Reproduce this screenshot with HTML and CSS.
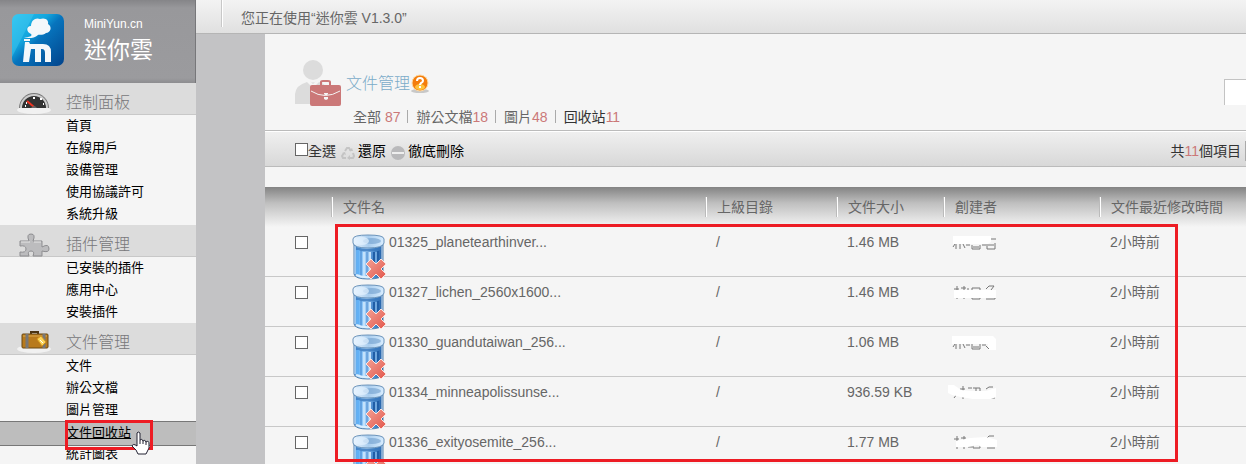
FILE: index.html
```html
<!DOCTYPE html>
<html lang="zh-Hant">
<head>
    <meta charset="UTF-8">
    <title>迷你雲 - 文件管理</title>
    <link rel="stylesheet" href="styles.css">
</head>
<body>
    <svg class="defs" aria-hidden="true">
        <defs>
            <linearGradient id="binBody">
                <stop offset="0" stop-color="#4a8fd6"/>
                <stop offset=".15" stop-color="#7cc0fa"/>
                <stop offset=".45" stop-color="#a5d0f8"/>
                <stop offset=".7" stop-color="#4a8dd0"/>
                <stop offset="1" stop-color="#1d5aa0"/>
            </linearGradient>
            <linearGradient id="binTop">
                <stop offset="0" stop-color="#eef7ff"/>
                <stop offset=".5" stop-color="#a9cdee"/>
                <stop offset="1" stop-color="#d9edff"/>
            </linearGradient>
            <linearGradient id="binCross" x2="1" y2="1">
                <stop offset="0" stop-color="#f3a196"/>
                <stop offset="1" stop-color="#e2564a"/>
            </linearGradient>
        </defs>
        <symbol id="bin" viewBox="0 0 34 46">
            <path d="M2 9 V40 Q3 45 16 45 Q30 45 31 40 V9Z" fill="url(#binBody)" stroke="#5580ab"/>
            <path d="M3 12 V40 M30 12 V28" stroke="#dcedfc"/>
            <path d="M4 13 Q16 17 29 13 V16 Q16 19 4 16Z" fill="#3a78bd" opacity=".8"/>
            <path d="M6 16 V40" stroke="#61b0f5" stroke-width="3"/>
            <path d="M9 17 V42 M15 18 V42 M20 18 V36" stroke="#3c7fc8" stroke-width="1"/>
            <path d="M12 18 V42 M18 18 V42" stroke="#c4e1fb" stroke-width="2"/>
            <path d="M22 18 V32 M26 17 V30" stroke="#1f5da6" stroke-width="2"/>
            <path d="M24 18 V30" stroke="#9ccbf5" stroke-width="1"/>
            <path d="M4 41 Q10 44 20 43" fill="none" stroke="#dbeefd" stroke-width="2"/>
            <path d="M1 5 Q1 1 16 1 Q32 1 32 5 V9 Q31 14 16 14 Q2 14 1 9Z" fill="url(#binTop)" stroke="#6b93ba"/>
            <ellipse cx="20" cy="7" rx="9" ry="3" fill="#6f9fcd" opacity=".6"/>
            <ellipse cx="10" cy="7" rx="7" ry="4" fill="#e4f2ff" opacity=".7"/>
            <path d="M19 25 L24 30 L29 25 L34 30 L29 35 L34 40 L29 45 L24 40 L19 45 L14 40 L19 35 L14 30Z" fill="url(#binCross)" stroke="#fbe3df" stroke-width="1" stroke-linejoin="round"/>
        </symbol>
    </svg>

    <aside class="sidebar">
        <div class="brand">
            <svg class="brand-logo" viewBox="0 0 52 52" aria-hidden="true">
                <defs>
                    <linearGradient id="logoBg" x2="1" y2="1">
                        <stop offset="0" stop-color="#28c3ee"/>
                        <stop offset=".35" stop-color="#13a6de"/>
                        <stop offset=".5" stop-color="#0774bd"/>
                        <stop offset="1" stop-color="#02438b"/>
                    </linearGradient>
                </defs>
                <rect width="52" height="52" rx="7" fill="url(#logoBg)"/>
                <path d="M0 43 L22 0 H7 Q0 0 0 7Z" fill="#4ed0f5" opacity=".4"/>
                <path d="M19 20 C14 18 14 12 19 12 C19 6 24 3 28 5 C34 3 37 7 36 10 C41 13 38 19 34 19 C30 22 27 20 26 21 C22 25 17 24 12 24 C17 23 21 22 19 20Z" fill="#f4f8fb"/>
                <path d="M12 25 H18 V27 H12Z" fill="#f4f8fb"/>
                <path d="M11 48 L13 28 H17 L18 30 H31 Q39 30 39 38 V48 H33 V39 Q33 35 30 35 H29 V48 H23 V35 H19 L17 48Z" fill="#f4f8fb"/>
            </svg>
            <div class="brand-text">
                <span class="brand-url">MiniYun.cn</span>
                <span class="brand-name">迷你雲</span>
            </div>
        </div>

        <nav>
            <h2 class="menu-title">
                <svg class="menu-icon" viewBox="0 0 34 24" aria-hidden="true">
                    <ellipse cx="17" cy="19" rx="17" ry="4" fill="#f6f6f6" opacity=".8"/>
                    <path d="M2 17 A15 15 0 0 1 32 17Z" fill="#777"/>
                    <path d="M3 17 A14 14 0 0 1 31 17Z" fill="#ccc"/>
                    <path d="M5 17 A12 12 0 0 1 29 17Z" fill="#333"/>
                    <path d="M9 12h1 M16 7h2 M23 8h2 M26 13h1 M8 15h1" stroke="#fff" stroke-width="2"/>
                    <path d="M10 10 L17 16" stroke="#e32" stroke-width="2"/>
                    <path d="M14 17 q3 -4 6 0" fill="#666"/>
                </svg>
                控制面板
            </h2>
            <ul class="menu">
                <li><a href="#">首頁</a></li>
                <li><a href="#">在線用戶</a></li>
                <li><a href="#">設備管理</a></li>
                <li><a href="#">使用協議許可</a></li>
                <li><a href="#">系統升級</a></li>
            </ul>

            <h2 class="menu-title">
                <svg class="menu-icon" viewBox="0 0 34 24" aria-hidden="true">
                    <path d="M3 8 H12 Q9 1 14 1 Q19 1 16 8 H25 V14 Q32 10 32 16 Q32 20 25 18 V23 H16 Q18 18 14 18 Q10 18 12 23 H3 V19 Q9 20 9 16 Q9 12 3 13Z" fill="#bcbcbe" stroke="#8d8d90"/>
                    <path d="M4 9 H13 M17 9 H24" stroke="#e5e5e5"/>
                </svg>
                插件管理
            </h2>
            <ul class="menu">
                <li><a href="#">已安裝的插件</a></li>
                <li><a href="#">應用中心</a></li>
                <li><a href="#">安裝插件</a></li>
            </ul>

            <h2 class="menu-title">
                <svg class="menu-icon" viewBox="0 0 34 24" aria-hidden="true">
                    <ellipse cx="17" cy="18" rx="17" ry="4" fill="#f6f6f6" opacity=".8"/>
                    <path d="M14 3 V1 H21 V3" fill="none" stroke="#4b3412" stroke-width="2"/>
                    <rect x="5" y="3" width="26" height="14" rx="1" fill="#b87a1c" stroke="#6b4813"/>
                    <path d="M6 5 H30" stroke="#dda94b"/>
                    <path d="M10 3 V17 M27 3 V17" stroke="#777" stroke-width="3"/>
                    <path d="M20 8 L24 5 L29 11 L25 15Z" fill="#fbd55c" stroke="#d4961c"/>
                    <path d="M23 9 L26 12" stroke="#fff"/>
                </svg>
                文件管理
            </h2>
            <ul class="menu">
                <li><a href="#">文件</a></li>
                <li><a href="#">辦公文檔</a></li>
                <li><a href="#">圖片管理</a></li>
                <li class="active">
                    <a href="#">文件回收站</a>
                    <span class="mark-menu"></span>
                    <svg class="cursor" viewBox="0 0 20 26" aria-hidden="true">
                        <path d="M6 15 V3 Q7 1 9 3 V10 Q11 8 12 11 Q14 9 15 12 Q18 10 18 14 V18 L15 24 H7 L5 20 L1 16 Q2 13 6 16Z" fill="#fff" stroke="#223"/>
                        <path d="M9 10 V14 M12 11 V14 M15 12 V15" stroke="#223"/>
                    </svg>
                </li>
                <li><a href="#">統計圖表</a></li>
            </ul>
        </nav>
    </aside>

    <div class="main">
        <header class="topbar">
            <span class="topbar-text">您正在使用“迷你雲 V1.3.0”</span>
        </header>

        <div class="content">
            <div class="page-head">
                <svg class="page-icon" viewBox="0 0 46 48" aria-hidden="true">
                    <circle cx="18" cy="11" r="10" fill="#dcdcdc"/>
                    <path d="M0 45 V35 Q1 26 12 23 L18 29 L24 23 Q32 25 34 34 V45Z" fill="#dcdcdc"/>
                    <path d="M15 22 Q18 25 21 22 L18 25Z" fill="#dcdcdc"/>
                    <path d="M26 26 V23 Q26 22 28 22 H33 Q35 22 35 23 V26" fill="none" stroke="#cb7878" stroke-width="2"/>
                    <rect x="15" y="26" width="31" height="21" rx="2" fill="#cb7878"/>
                    <path d="M16 32 Q30 41 45 32" fill="none" stroke="#f5f5f5"/>
                    <path d="M29 34 h4 v1 l-1 1 h-2 l-1 -1Z M29 38 h4 v2 l-2 1 l-2 -1Z" fill="#f5f5f5"/>
                </svg>
                <div class="page-info">
                    <h1 class="page-title">
                        文件管理
                        <svg class="help" viewBox="0 0 20 20" aria-label="說明">
                            <ellipse cx="10" cy="17" rx="9" ry="2" fill="#aaa" opacity=".6"/>
                            <circle cx="10" cy="9" r="8" fill="#f47d0c" stroke="#fbd9a5"/>
                            <ellipse cx="10" cy="13" rx="5" ry="3" fill="#ffc23c"/>
                            <path d="M7 7 Q7 4 10 4 Q13 4 13 7 Q13 8 11 9 Q10 10 10 11 M10 12 V14" fill="none" stroke="#fff" stroke-width="2"/>
                        </svg>
                    </h1>
                    <div class="tabs">
                        <a href="#">全部 <b>87</b></a>
                        <a href="#">辦公文檔<b>18</b></a>
                        <a href="#">圖片<b>48</b></a>
                        <a href="#" class="current">回收站<b>11</b></a>
                    </div>
                </div>
                <input class="search" type="text" aria-label="搜索">
            </div>

            <div class="toolbar">
                <input type="checkbox" id="all">
                <label for="all">全選</label>
                <button type="button">
                    <svg class="tool-icon" viewBox="0 0 14 14" aria-hidden="true">
                        <path d="M4 5 L6 2 H8 L10 5 M12 7 L13 10 L12 12 H8 M5 12 H2 L1 10 L3 7" fill="none" stroke="#c4c4c4" stroke-width="2"/>
                        <path d="M8 5 H12 L11 2Z M9 9 V14 L6 12Z M1 7 L4 6 L5 9Z" fill="#c4c4c4"/>
                    </svg>
                    還原
                </button>
                <button type="button">
                    <svg class="tool-icon" viewBox="0 0 14 14" aria-hidden="true">
                        <circle cx="7" cy="7" r="7" fill="#b9b9bb"/>
                        <rect x="1" y="6" width="12" height="2" fill="#eee"/>
                    </svg>
                    徹底刪除
                </button>
                <span class="total">共<b>11</b>個項目</span>
            </div>

            <div class="list">
                <table class="files">
                    <colgroup>
                        <col class="col-check">
                        <col>
                        <col class="col-dir">
                        <col class="col-size">
                        <col class="col-creator">
                        <col class="col-time">
                    </colgroup>
                    <thead>
                        <tr>
                            <th></th>
                            <th><span>文件名</span></th>
                            <th><span>上級目錄</span></th>
                            <th><span>文件大小</span></th>
                            <th><span>創建者</span></th>
                            <th><span>文件最近修改時間</span></th>
                        </tr>
                    </thead>
                    <tbody>
                        <tr>
                            <td><input type="checkbox" aria-label="選擇 01325"></td>
                            <td><div class="file"><svg class="bin"><use href="#bin"/></svg>01325_planetearthinver...</div></td>
                            <td>/</td>
                            <td>1.46 MB</td>
                            <td>
                                <svg class="hidden-name" viewBox="0 0 50 16" aria-hidden="true">
                                    <path d="M8 9 V14 M5 12 L7 9 M12 9 V14 M15 9 L17 13 M18 10 H22 M24 10 V14 H32 V10 M25 12 H31 M34 10 H38 M39 9 V14 H47 V8 M40 10 H46 M43 4 H48" fill="none" stroke="#777"/>
                                    <path d="M5 1 H43 V7 L40 9 H5Z" fill="#fff"/>
                                </svg>
                            </td>
                            <td>2小時前</td>
                        </tr>
                        <tr>
                            <td><input type="checkbox" aria-label="選擇 01327"></td>
                            <td><div class="file"><svg class="bin"><use href="#bin"/></svg>01327_lichen_2560x1600...</div></td>
                            <td>/</td>
                            <td>1.46 MB</td>
                            <td>
                                <svg class="hidden-name" viewBox="0 0 50 16" aria-hidden="true">
                                    <path d="M6 4 H11 M9 1 V14 M13 3 H18 M16 1 V14 M20 3 V6 M24 3 H32 V14 H24Z M38 4 L41 1 H46 L43 5 M38 14 H47 V10" fill="none" stroke="#777"/>
                                    <path d="M6 5 H48 V13 H6Z" fill="#fff"/>
                                </svg>
                            </td>
                            <td>2小時前</td>
                        </tr>
                        <tr>
                            <td><input type="checkbox" aria-label="選擇 01330"></td>
                            <td><div class="file"><svg class="bin"><use href="#bin"/></svg>01330_guandutaiwan_256...</div></td>
                            <td>/</td>
                            <td>1.06 MB</td>
                            <td>
                                <svg class="hidden-name" viewBox="0 0 50 16" aria-hidden="true">
                                    <path d="M4 1 H45 L48 4 V15 H40 V9 H4Z" fill="#fff"/>
                                    <path d="M8 9 V14 M5 12 L7 9 M12 9 V14 M15 9 L17 13 M18 10 H22 M24 9 V14 H32 V9 M25 12 H31 M34 10 H38 M38 11 L41 14" fill="none" stroke="#777"/>
                                </svg>
                            </td>
                            <td>2小時前</td>
                        </tr>
                        <tr>
                            <td><input type="checkbox" aria-label="選擇 01334"></td>
                            <td><div class="file"><svg class="bin"><use href="#bin"/></svg>01334_minneapolissunse...</div></td>
                            <td>/</td>
                            <td>936.59 KB</td>
                            <td>
                                <svg class="hidden-name" viewBox="0 0 50 16" aria-hidden="true">
                                    <path d="M6 13 L9 9 M12 4 H17 M15 1 V14 M20 3 H24 M25 3 H32 V8 M28 3 V8 M38 4 L41 2 H45 M43 13 H47" fill="none" stroke="#777"/>
                                    <path d="M0 0 H6 L13 5 L24 6 H38 L48 3 V12 L43 14 H25 L13 12 L4 10 L0 8Z" fill="#fff"/>
                                </svg>
                            </td>
                            <td>2小時前</td>
                        </tr>
                        <tr>
                            <td><input type="checkbox" aria-label="選擇 01336"></td>
                            <td><div class="file"><svg class="bin"><use href="#bin"/></svg>01336_exityosemite_256...</div></td>
                            <td>/</td>
                            <td>1.77 MB</td>
                            <td>
                                <svg class="hidden-name" viewBox="0 0 50 16" aria-hidden="true">
                                    <path d="M6 4 H11 M9 1 V14 M13 3 H18 M16 1 V14 M20 12 H24 M25 9 V13 H32 V9 M38 4 L41 1 H46 M39 13 H47" fill="none" stroke="#777"/>
                                    <path d="M8 6 L22 3 L38 2 L49 5 V12 H33 L30 10 L20 12 H8Z" fill="#fff"/>
                                </svg>
                            </td>
                            <td>2小時前</td>
                        </tr>
                    </tbody>
                </table>
                <div class="mark-list"></div>
            </div>
        </div>
    </div>
</body>
</html>
```
FILE: styles.css
```css
* {
    box-sizing: border-box;
}

body {
    margin: 0;
    display: flex;
    height: 100vh;
    overflow: hidden;
    background: #c3c3c5;
    color: #666;
    font-family: "Liberation Sans", "Noto Sans CJK TC", sans-serif;
    font-size: 14px;
    line-height: 20px;
}

a {
    color: inherit;
    text-decoration: none;
}

b {
    color: #cb7878;
    font-weight: normal;
}

h1,
h2,
ul {
    margin: 0;
    padding: 0;
}

h1,
h2 {
    font-weight: 300;
}

input[type="checkbox"] {
    appearance: none;
    width: 13px;
    height: 13px;
    margin: 0;
    border: 1px solid #666;
    background: #fff;
}

.defs {
    position: absolute;
    width: 0;
    height: 0;
}

/* sidebar */
.sidebar {
    flex: 0 0 196px;
    background: #f5f5f5;
}

.brand {
    display: flex;
    gap: 20px;
    height: 83px;
    padding: 14px 12px;
    background: linear-gradient(#858588, #98989b 8px, #9b9b9e 78px, #8d8d90);
    border-right: 1px solid #77777a;
    color: #fff;
}

.brand-logo {
    width: 52px;
    height: 52px;
}

.brand-text {
    display: flex;
    flex-direction: column;
}

.brand-url {
    font-size: 12px;
}

.brand-name {
    font-size: 23px;
    line-height: 32px;
}

.menu-title {
    display: flex;
    align-items: center;
    gap: 15px;
    height: 32px;
    padding: 8px 0 0 17px;
    background: #dcdcdc;
    border-bottom: 1px solid #c8c8c8;
    color: #77777a;
    font-size: 16px;
}

.menu-icon {
    width: 34px;
    height: 24px;
}

.menu {
    list-style: none;
    color: #000;
    font-size: 13px;
    line-height: 22px;
}

.menu li {
    height: 22px;
    padding-left: 66px;
}

.menu .active {
    position: relative;
    height: 25px;
    margin-bottom: -3px;
    background: #bdbdbd;
    border-top: 1px solid #777;
    border-bottom: 1px solid #777;
}

.active a {
    text-decoration: underline;
}

.mark-menu {
    position: absolute;
    top: -2px;
    left: 65px;
    width: 88px;
    height: 30px;
    border: 3px solid #ed1c24;
    z-index: 1;
}

.cursor {
    position: absolute;
    top: 8px;
    left: 131px;
    width: 20px;
    height: 26px;
    z-index: 2;
}

/* right side */
.main {
    flex: 1;
    min-width: 0;
}

.topbar {
    height: 34px;
    padding: 0 0 6px 25px;
    background: linear-gradient(#f3f3f3, #e0e0e0);
    border-bottom: 1px solid #b5b5b5;
}

.topbar-text {
    display: block;
    height: 27px;
    padding: 8px 0 0 19px;
    border-left: 1px solid #c8c8c8;
    box-shadow: inset 1px 0 #fff;
}

.content {
    margin-left: 69px;
    background: #f5f5f5;
}

.page-head {
    display: flex;
    height: 97px;
    padding-left: 30px;
    border-bottom: 1px solid #bbb;
}

.page-icon {
    width: 46px;
    height: 48px;
    margin-top: 25px;
}

.page-info {
    padding: 38px 0 0 5px;
}

.page-title {
    display: flex;
    align-items: center;
    height: 24px;
    color: #7aabc8;
    font-size: 16px;
}

.help {
    width: 20px;
    height: 20px;
}

.tabs {
    display: flex;
    margin-top: 10px;
    padding-left: 7px;
    line-height: 22px;
}

.tabs a + a {
    position: relative;
    padding-left: 16px;
}

.tabs a + a::before {
    content: "";
    position: absolute;
    top: 4px;
    left: 7px;
    height: 13px;
    border-left: 1px solid #aaa;
}

.tabs .current {
    color: #333;
}

.search {
    width: 22px;
    height: 26px;
    margin: 45px 0 0 auto;
    border: solid #c3c3c3;
    border-width: 1px 0 0 1px;
    background: #fff;
}

.toolbar {
    display: flex;
    align-items: center;
    height: 36px;
    padding: 5px 0 0 30px;
    background: linear-gradient(#f0f0f0, #d8d8d8);
    border-bottom: 1px solid #bbb;
    box-shadow: inset 0 1px #fff;
    color: #333;
}

.toolbar input {
    margin-bottom: 4px;
}

.toolbar button {
    display: flex;
    align-items: center;
    gap: 3px;
    padding: 0 0 0 5px;
    border: 0;
    background: none;
    color: #000;
    font: inherit;
}

.tool-icon {
    width: 14px;
    height: 14px;
    margin-top: 3px;
}

.total {
    margin-left: auto;
    padding-right: 4px;
    border-right: 1px solid #aaa;
}

/* file list */
.list {
    position: relative;
    margin-top: 20px;
}

.files {
    width: 100%;
    table-layout: fixed;
    border-spacing: 0;
}

.col-check {
    width: 66px;
}

.col-dir {
    width: 131px;
}

.col-size {
    width: 107px;
}

.col-creator {
    width: 156px;
}

.col-time {
    width: 147px;
}

.files thead tr {
    height: 40px;
    background: linear-gradient(#838383, #bfbfbf 40%, #f5f5f5);
}

.files th {
    padding: 0;
    font-weight: normal;
    text-align: left;
}

.files th span {
    display: block;
    padding-left: 11px;
    border-left: 1px solid #bbb;
    box-shadow: inset 1px 0 #fff;
}

.files td {
    height: 50px;
    padding: 5px 0 0 11px;
    border-bottom: 1px solid #c8c8c8;
    vertical-align: top;
}

.files td:first-child {
    padding: 9px 0 0 30px;
}

.files td input {
    display: block;
}

.file {
    display: flex;
    gap: 3px;
    height: 40px;
    padding-left: 10px;
}

.bin {
    flex: none;
    width: 34px;
    height: 46px;
    margin-top: 2px;
}

.hidden-name {
    display: block;
    width: 50px;
    height: 16px;
    margin-left: -6px;
    margin-top: 3px;
}

.mark-list {
    position: absolute;
    top: 37px;
    left: 70px;
    right: 68px;
    height: 238px;
    border: 3px solid #ed1c24;
}
```
